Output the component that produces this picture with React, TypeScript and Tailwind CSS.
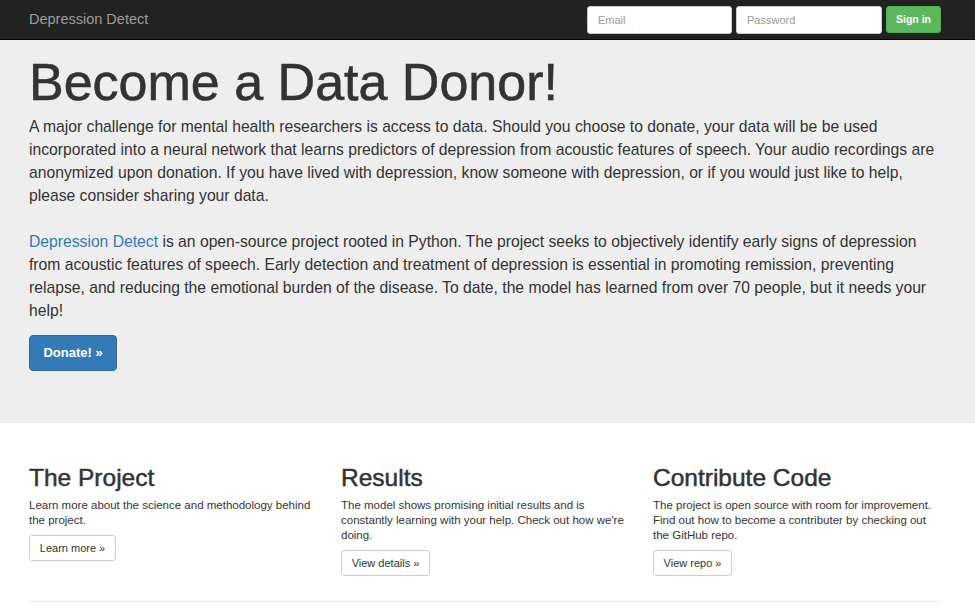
import React from "react";

export default function App() {
  return (
    <div className="min-h-[608px] bg-white text-[#333]" style={{ fontFamily: '"Liberation Sans", Arial, Helvetica, sans-serif' }}>
      <nav className="h-10 bg-[#222] border-b border-[#080808]">
        <div className="ml-[29px] w-[912px] h-full flex items-center justify-between">
          <span className="text-[14.5px] text-[#9d9d9d]">Depression Detect</span>
          <form className="flex items-center gap-1 h-full" onSubmit={(e) => e.preventDefault()}>
            <input
              className="w-[145px] h-[28px] rounded-[3px] border border-[#ccc] bg-white px-[10px] text-[11px] text-[#555] placeholder:text-[#999] outline-none"
              placeholder="Email"
            />
            <input
              type="password"
              className="w-[146px] h-[28px] rounded-[3px] border border-[#ccc] bg-white px-[10px] text-[11px] text-[#555] placeholder:text-[#999] outline-none"
              placeholder="Password"
            />
            <button className="w-[55px] h-[27px] rounded-[3px] border border-[#4cae4c] bg-[#5cb85c] text-white text-[10.5px] font-bold">
              Sign in
            </button>
          </form>
        </div>
      </nav>

      <section className="bg-[#eee] pt-[14px] pb-[52px]">
        <div className="ml-[29px] w-[912px]">
          <h1 className="text-[52px] leading-[57px] text-[#333] [-webkit-text-stroke:0.6px_#333]">Become a Data Donor!</h1>
          <p className="mt-[4px] text-[15.7px] leading-[23px]">
            A major challenge for mental health researchers is access to data. Should you choose to donate, your data will be be used incorporated into a neural network that learns predictors of depression from acoustic features of speech. Your audio recordings are anonymized upon donation. If you have lived with depression, know someone with depression, or if you would just like to help, please consider sharing your data.
          </p>
          <p className="mt-[23px] text-[15.7px] leading-[23px]">
            <a className="text-[#337ab7]" href="#">Depression Detect</a> is an open-source project rooted in Python. The project seeks to objectively identify early signs of depression from acoustic features of speech. Early detection and treatment of depression is essential in promoting remission, preventing relapse, and reducing the emotional burden of the disease. To date, the model has learned from over 70 people, but it needs your help!
          </p>
          <button className="mt-[13px] w-[88px] h-[36px] rounded-[4px] border border-[#2e6da4] bg-[#337ab7] text-white text-[13px] font-bold">
            Donate! »
          </button>
        </div>
      </section>

      <div className="ml-[29px] w-[912px] pt-[41px]">
        <div className="grid grid-cols-3 gap-[24px]">
          {[
            {
              t: "The Project",
              d: "Learn more about the science and methodology behind the project.",
              b: "Learn more »",
              w: "w-[87px]",
            },
            {
              t: "Results",
              d: "The model shows promising initial results and is constantly learning with your help. Check out how we're doing.",
              b: "View details »",
              w: "w-[89px]",
            },
            {
              t: "Contribute Code",
              d: "The project is open source with room for improvement. Find out how to become a contributer by checking out the GitHub repo.",
              b: "View repo »",
              w: "w-[79px]",
            },
          ].map((c) => (
            <div key={c.t}>
              <h2 className="text-[24.5px] leading-[27px] text-[#333] [-webkit-text-stroke:0.5px_#333]">{c.t}</h2>
              <p className="mt-[7px] text-[11.5px] leading-[15px]">{c.d}</p>
              <button className={`mt-[7px] ${c.w} h-[26px] rounded-[3px] border border-[#ccc] bg-white text-[11px] text-[#333]`}>
                {c.b}
              </button>
            </div>
          ))}
        </div>
        <hr className="mt-[25px] border-t border-[#eee]" />
      </div>
    </div>
  );
}
